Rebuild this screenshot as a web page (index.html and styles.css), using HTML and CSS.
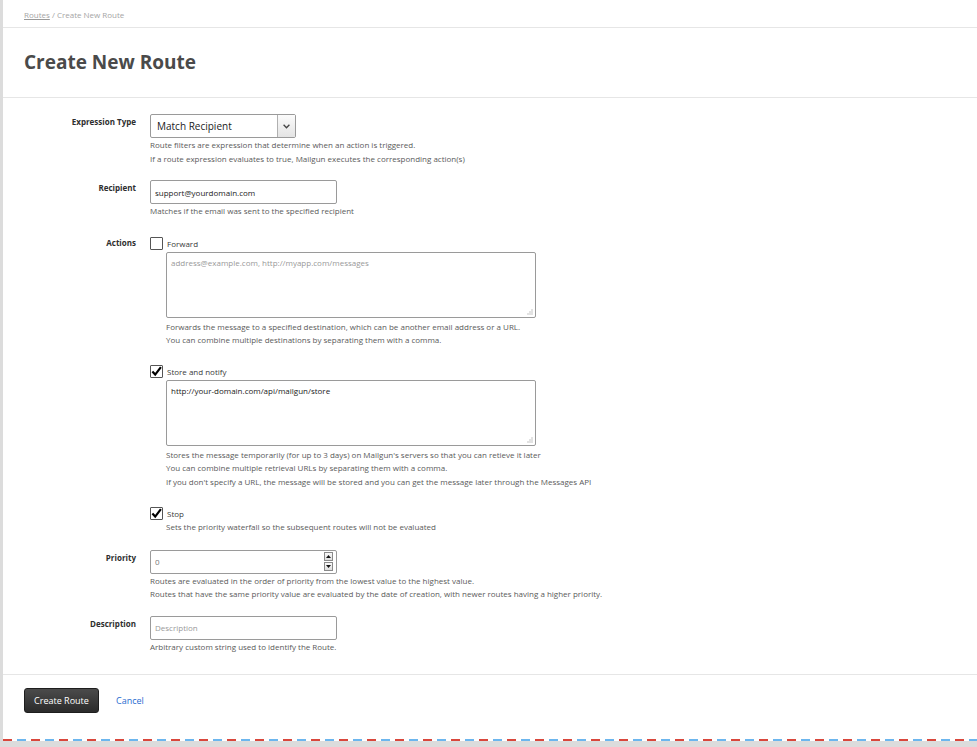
FILE: index.html
```html
<!DOCTYPE html>
<html lang="en">
<head>
<meta charset="utf-8">
<title>Create New Route</title>
<link rel="stylesheet" href="styles.css">
</head>
<body>
<div class="panel">
  <div class="crumbs"><a href="#">Routes</a> / Create New Route</div>
  <h1 class="title">Create New Route</h1>

  <form class="form">
    <div class="row">
      <div class="label">Expression Type</div>
      <div class="field">
        <div class="select">
          <span class="select-text">Match Recipient</span>
          <span class="select-btn"><svg width="7" height="5" viewBox="0 0 7 5"><path d="M0.6 0.8 L3.5 3.8 L6.4 0.8" fill="none" stroke="#444" stroke-width="1.3"/></svg></span>
        </div>
        <div class="help">
          <p>Route filters are expression that determine when an action is triggered.</p>
          <p>If a route expression evaluates to true, Mailgun executes the corresponding action(s)</p>
        </div>
      </div>
    </div>

    <div class="row">
      <div class="label">Recipient</div>
      <div class="field">
        <input class="text-input" type="text" value="support@yourdomain.com">
        <div class="help"><p>Matches if the email was sent to the specified recipient</p></div>
      </div>
    </div>

    <div class="row">
      <div class="label label-check">Actions</div>
      <div class="field field-actions">
        <div class="group">
          <div class="check"><span class="cbox"></span><span>Forward</span></div>
          <div class="ta-wrap">
            <textarea class="ta" placeholder="address@example.com, http://myapp.com/messages"></textarea>
            <svg class="grip" width="6" height="6" viewBox="0 0 6 6"><g fill="#8a8a8a"><rect x="4.5" y="0.5" width="1" height="1"/><rect x="2.5" y="2.5" width="1" height="1"/><rect x="4.5" y="2.5" width="1" height="1"/><rect x="0.5" y="4.5" width="1" height="1"/><rect x="2.5" y="4.5" width="1" height="1"/><rect x="4.5" y="4.5" width="1" height="1"/></g></svg>
          </div>
          <div class="help help-ta indent">
            <p>Forwards the message to a specified destination, which can be another email address or a URL.</p>
            <p>You can combine multiple destinations by separating them with a comma.</p>
          </div>
        </div>

        <div class="group">
          <div class="check"><span class="cbox"><svg width="11" height="11" viewBox="0 0 11 11"><path d="M1.4 5.6 L4.2 8.6 L9.9 1.2" fill="none" stroke="#000" stroke-width="2.2"/></svg></span><span>Store and notify</span></div>
          <div class="ta-wrap">
            <textarea class="ta">http://your-domain.com/api/mailgun/store</textarea>
            <svg class="grip" width="6" height="6" viewBox="0 0 6 6"><g fill="#8a8a8a"><rect x="4.5" y="0.5" width="1" height="1"/><rect x="2.5" y="2.5" width="1" height="1"/><rect x="4.5" y="2.5" width="1" height="1"/><rect x="0.5" y="4.5" width="1" height="1"/><rect x="2.5" y="4.5" width="1" height="1"/><rect x="4.5" y="4.5" width="1" height="1"/></g></svg>
          </div>
          <div class="help help-ta indent">
            <p>Stores the message temporarily (for up to 3 days) on Mailgun's servers so that you can retieve it later</p>
            <p>You can combine multiple retrieval URLs by separating them with a comma.</p>
            <p>If you don't specify a URL, the message will be stored and you can get the message later through the Messages API</p>
          </div>
        </div>

        <div class="group">
          <div class="check"><span class="cbox"><svg width="11" height="11" viewBox="0 0 11 11"><path d="M1.4 5.6 L4.2 8.6 L9.9 1.2" fill="none" stroke="#000" stroke-width="2.2"/></svg></span><span>Stop</span></div>
          <div class="help indent">
            <p>Sets the priority waterfall so the subsequent routes will not be evaluated</p>
          </div>
        </div>
      </div>
    </div>

    <div class="row">
      <div class="label">Priority</div>
      <div class="field">
        <div class="num-wrap">
          <input class="text-input num" type="text" value="0">
          <span class="spin">
            <span class="spin-btn"><svg width="5" height="3" viewBox="0 0 5 3"><path d="M0 3 L2.5 0 L5 3 Z" fill="#111"/></svg></span>
            <span class="spin-btn"><svg width="5" height="3" viewBox="0 0 5 3"><path d="M0 0 L5 0 L2.5 3 Z" fill="#111"/></svg></span>
          </span>
        </div>
        <div class="help">
          <p>Routes are evaluated in the order of priority from the lowest value to the highest value.</p>
          <p>Routes that have the same priority value are evaluated by the date of creation, with newer routes having a higher priority.</p>
        </div>
      </div>
    </div>

    <div class="row">
      <div class="label">Description</div>
      <div class="field">
        <input class="text-input" type="text" placeholder="Description">
        <div class="help"><p>Arbitrary custom string used to identify the Route.</p></div>
      </div>
    </div>
  </form>

  <div class="actions">
    <button class="btn" type="button">Create Route</button>
    <a class="cancel" href="#">Cancel</a>
  </div>
  <div class="stripe"></div>
</div>
</body>
</html>
```

FILE: styles.css
```css
* { box-sizing: border-box; }

html, body {
  margin: 0;
  padding: 0;
}

body {
  background: #dcdcdc;
  font-family: "Open Sans", "DejaVu Sans", sans-serif;
  color: #333;
  height: 747px;
  overflow: hidden;
}

.panel {
  margin-left: 3px;
  background: #fff;
}

.crumbs {
  height: 28px;
  border-bottom: 1px solid #e6e6e6;
  padding: 9px 21px 0;
  font-size: 8px;
  line-height: 12px;
  color: #a5a5a5;
}

.crumbs a {
  color: #a5a5a5;
  text-decoration: underline;
  text-decoration-color: #999;
}

.title {
  margin: 0;
  height: 70px;
  border-bottom: 1px solid #e6e6e6;
  padding-left: 21px;
  font-size: 19px;
  font-weight: 700;
  line-height: 69px;
  color: #4a4a4a;
}

.form {
  padding: 16px 0 21px;
}

.row {
  display: grid;
  grid-template-columns: 133px 1fr;
  column-gap: 14px;
  margin-bottom: 15px;
}

.row:last-child {
  margin-bottom: 0;
}

.label {
  text-align: right;
  font-weight: 700;
  font-size: 8px;
  line-height: 14px;
  padding-top: 1px;
  color: #2e2e2e;
}

.label-check {
  padding-top: 3px;
}

.field-actions {
  padding: 4px 0 1px;
}

.help {
  margin-top: 0;
  font-size: 8px;
  line-height: 13.5px;
  color: #5a5a5a;
}

.help p {
  margin: 0;
}

.help-ta {
  margin-top: 2px;
}

.indent {
  margin-left: 16px;
}

.select {
  position: relative;
  width: 146px;
  height: 24px;
  border: 1px solid #9a9a9a;
  border-radius: 2px;
  background: #fff;
  font-size: 10px;
  line-height: 22px;
  color: #222;
  padding-left: 6px;
}

.select-btn {
  position: absolute;
  right: 0;
  top: 0;
  width: 18px;
  height: 22px;
  border-left: 1px solid #b0b0b0;
  background: linear-gradient(#fbfbfb, #e4e4e4);
  display: flex;
  align-items: center;
  justify-content: center;
}

.text-input {
  display: block;
  width: 187px;
  height: 24px;
  border: 1px solid #9a9a9a;
  border-radius: 2px;
  padding: 0 4px;
  font-family: "Open Sans", "DejaVu Sans", sans-serif;
  font-size: 8px;
  color: #1a1a1a;
  outline: none;
  background: #fff;
}

.text-input::placeholder {
  color: #999;
}

.num {
  color: #777;
}

.num-wrap {
  position: relative;
  width: 187px;
}

.spin {
  position: absolute;
  right: 4px;
  top: 2px;
  display: flex;
  flex-direction: column;
  gap: 1px;
}

.spin-btn {
  width: 9px;
  height: 9px;
  border: 1px solid #8a8a8a;
  background: linear-gradient(#fafafa, #dedede);
  display: flex;
  align-items: center;
  justify-content: center;
}

.check {
  display: flex;
  align-items: center;
  gap: 4px;
  height: 14px;
  font-size: 8px;
  color: #3a3a3a;
}

.cbox {
  width: 13px;
  height: 13px;
  border: 1px solid #555;
  border-radius: 1px;
  background: #fff;
  display: flex;
  align-items: center;
  justify-content: center;
}

.group + .group {
  margin-top: 18px;
}

.ta-wrap {
  position: relative;
  margin: 1px 0 0 16px;
  width: 370px;
  height: 66px;
}

.ta {
  display: block;
  width: 100%;
  height: 100%;
  border: 1px solid #9a9a9a;
  border-radius: 2px;
  padding: 4px 4px;
  font-family: "Open Sans", "DejaVu Sans", sans-serif;
  font-size: 8px;
  line-height: 12px;
  color: #1a1a1a;
  resize: none;
  outline: none;
}

.ta::placeholder {
  color: #999;
}

.grip {
  position: absolute;
  right: 3px;
  bottom: 3px;
}

.actions {
  border-top: 1px solid #e6e6e6;
  padding: 13px 21px 26px;
  display: flex;
  align-items: center;
  gap: 17px;
}

.btn {
  height: 25px;
  width: 75px;
  border: 1px solid #1e1e1e;
  border-radius: 3px;
  background: linear-gradient(#4b4b4b, #2b2b2b);
  color: #fff;
  font-family: "Open Sans", "DejaVu Sans", sans-serif;
  font-size: 9px;
  padding: 0;
}

.cancel {
  font-size: 9px;
  color: #1f6bd0;
  text-decoration: none;
}

.stripe {
  height: 2px;
  background: repeating-linear-gradient(90deg, #d9473c 0 9px, #fff 9px 14px, #6cb6ee 14px 23px, #fff 23px 28px);
}
```
